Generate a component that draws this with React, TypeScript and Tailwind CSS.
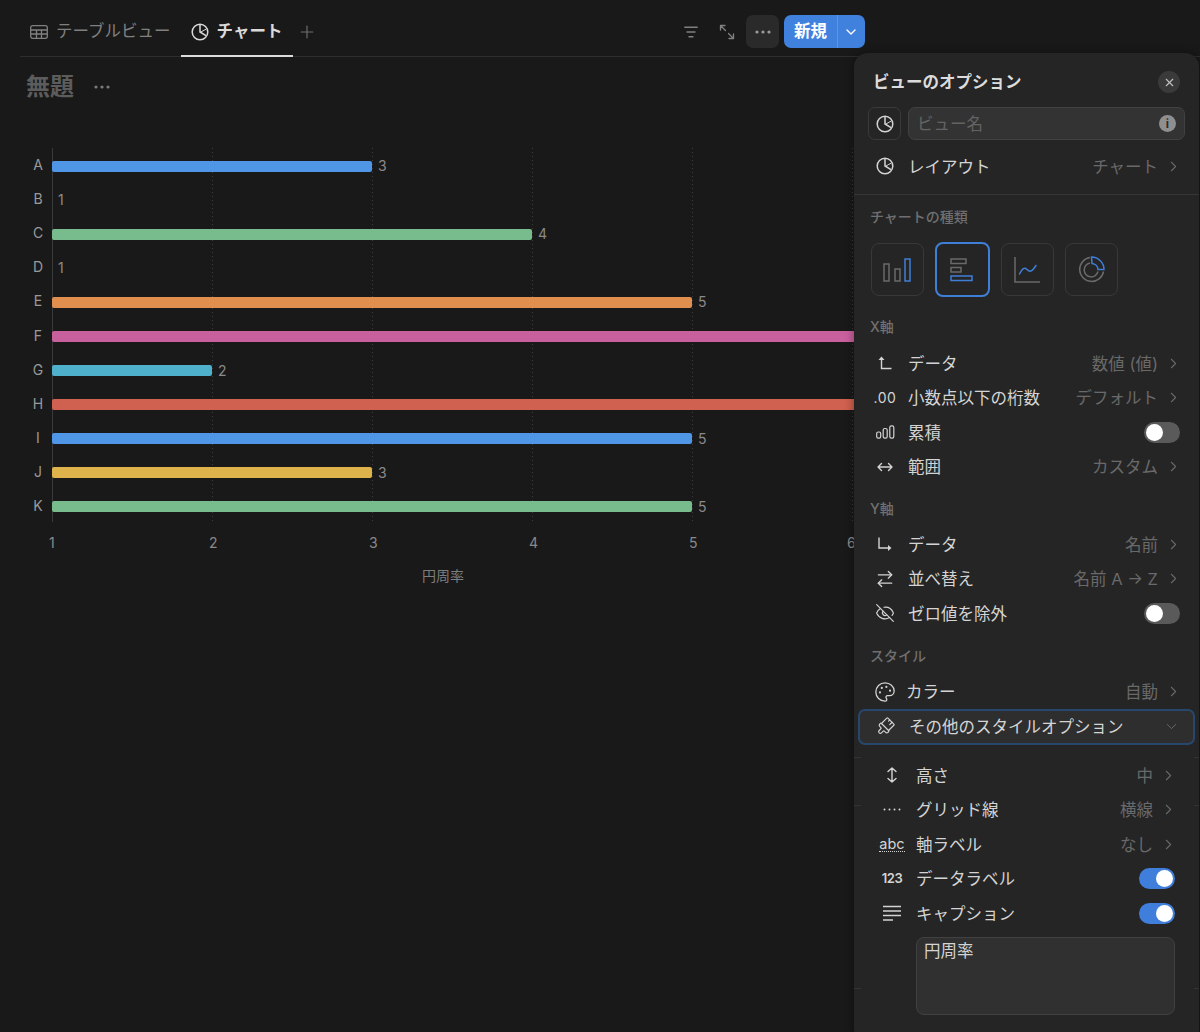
import { FC, ReactNode } from "react";
import { Palette, PaintbrushVertical, EyeOff, ArrowRightLeft, ChevronRight, ChevronDown, X, Plus } from "lucide-react";

const jp = "font-['Inter','Noto_Sans_CJK_JP',sans-serif]";

const PieIcon: FC<{ size?: number }> = ({ size = 18 }) => (
  <svg width={size} height={size} viewBox="0 0 18 18" fill="none" stroke="currentColor" strokeWidth="1.5">
    <circle cx="9" cy="9" r="7.8" />
    <path d="M9 1.2V9l6 3.6" />
    <path d="M9.6 9.2l5.4-3" strokeWidth="1" />
  </svg>
);

const TableIcon = () => (
  <svg width="18" height="14" viewBox="0 0 18 14" fill="none" stroke="currentColor" strokeWidth="1.3">
    <rect x="0.7" y="0.7" width="16.6" height="12.6" rx="2" />
    <path d="M0.7 5h16.6M0.7 9h16.6M6.5 5v8.3M11.5 5v8.3" />
  </svg>
);

const FilterIcon = () => (
  <svg width="14" height="12" viewBox="0 0 14 12" fill="none" stroke="currentColor" strokeWidth="1.4" strokeLinecap="round">
    <path d="M0.8 1.2h12.4M3 6h8M5 10.8h4" />
  </svg>
);

const ExpandIcon = () => (
  <svg width="16" height="16" viewBox="0 0 16 16" fill="none" stroke="currentColor" strokeWidth="1.3" strokeLinecap="round" strokeLinejoin="round">
    <path d="M1.5 6V1.5H6M1.5 1.5l5 5M14.5 10v4.5H10M14.5 14.5l-5-5" />
  </svg>
);

const Dots: FC<{ className?: string }> = ({ className }) => (
  <svg width="16" height="4" viewBox="0 0 16 4" fill="currentColor" className={className}>
    <circle cx="2" cy="2" r="1.6" />
    <circle cx="8" cy="2" r="1.6" />
    <circle cx="14" cy="2" r="1.6" />
  </svg>
);

const GridDots = () => (
  <svg width="18" height="3" viewBox="0 0 18 3" fill="currentColor">
    <circle cx="1.5" cy="1.5" r="1" />
    <circle cx="6.5" cy="1.5" r="1" />
    <circle cx="11.5" cy="1.5" r="1" />
    <circle cx="16.5" cy="1.5" r="1" />
  </svg>
);

const AxisUpIcon = () => (
  <svg width="16" height="16" viewBox="0 0 16 16" fill="none" stroke="currentColor" strokeWidth="1.4">
    <path d="M4.5 3v10.5h10" />
    <path d="M1.5 5l3-3.5 3 3.5z" fill="currentColor" stroke="none" />
  </svg>
);

const AxisRightIcon = () => (
  <svg width="16" height="16" viewBox="0 0 16 16" fill="none" stroke="currentColor" strokeWidth="1.4">
    <path d="M2 1.5v10.5h10" />
    <path d="M11 9l3.5 3-3.5 3z" fill="currentColor" stroke="none" />
  </svg>
);

const StackIcon = () => (
  <svg width="19" height="14" viewBox="0 0 19 14" fill="none" stroke="currentColor" strokeWidth="1.2">
    <rect x="0.7" y="7" width="4" height="6.2" rx="1.6" />
    <rect x="7.2" y="3.5" width="4" height="9.7" rx="1.6" />
    <rect x="13.8" y="0.8" width="4" height="12.4" rx="1.6" />
  </svg>
);

const RangeIcon = () => (
  <svg width="16" height="10" viewBox="0 0 16 10" fill="none" stroke="currentColor" strokeWidth="1.4" strokeLinecap="round" strokeLinejoin="round">
    <path d="M1 5h14M4.5 1.5L1 5l3.5 3.5M11.5 1.5L15 5l-3.5 3.5" />
  </svg>
);

const HeightIcon = () => (
  <svg width="12" height="16" viewBox="0 0 12 16" fill="none" stroke="currentColor" strokeWidth="1.4" strokeLinecap="round" strokeLinejoin="round">
    <path d="M6 1v14M2 4.5L6 1l4 3.5M2 11.5L6 15l4-3.5" />
  </svg>
);

const CaptionIcon = () => (
  <svg width="18" height="16" viewBox="0 0 18 16" fill="none" stroke="currentColor" strokeWidth="1.3">
    <path d="M0 1.5h18M0 6h18M0 10.5h18M0 15h10" />
  </svg>
);

const ChartBtn: FC<{ active?: boolean; children: ReactNode }> = ({ active, children }) => (
  <div className={active
    ? "w-[55px] h-[55px] -mt-[1px] rounded-[8px] border-2 border-[#3f7fd8] flex items-center justify-center"
    : "w-[53px] h-[53px] rounded-[8px] border border-[#383838] flex items-center justify-center"}>
    {children}
  </div>
);

const Toggle: FC<{ on?: boolean }> = ({ on }) => (
  <div className={on
    ? "w-[36px] h-[21px] rounded-full bg-[#3f7fdb] flex items-center justify-end px-[2px]"
    : "w-[36px] h-[21px] rounded-full bg-[#5a5a5a] flex items-center px-[2px]"}>
    <div className="w-[17px] h-[17px] rounded-full bg-white" />
  </div>
);

const Row: FC<{ icon: ReactNode; label: string; value?: string; toggle?: "on" | "off"; sub?: boolean; gap?: string }> = ({ icon, label, value, toggle, sub, gap }) => (
  <div className={sub ? "h-[34.5px] flex items-center pl-[22px] pr-[24px]" : "h-[34.5px] flex items-center pl-[15px] pr-[19px]"}>
    <div className="w-[32px] flex items-center justify-center text-[#d4d4d4]">{icon}</div>
    <span className={`mt-[2px] text-[16.5px] text-[#d4d4d4] ${gap ?? (sub ? "ml-[8px]" : "ml-[7px]")}`}>{label}</span>
    <div className="ml-auto flex items-center">
      {value && <span className="mt-[2px] text-[16.5px] text-[#696969]">{value}</span>}
      {value && <ChevronRight size={17} strokeWidth={1.5} className="text-[#696969] ml-[7px] -mr-[2px]" />}
      {toggle && <Toggle on={toggle === "on"} />}
    </div>
  </div>
);

const SectionLabel: FC<{ text: string; className: string }> = ({ text, className }) => (
  <div className={`h-[20px] pl-[16px] pb-[2px] flex items-center text-[14px] font-medium text-[#6f6f6f] ${className}`}>{text}</div>
);

const bars = [
  { name: "A", v: 3, color: "bg-[#4f96e6]" },
  { name: "B", v: 1, color: "" },
  { name: "C", v: 4, color: "bg-[#78bb8d]" },
  { name: "D", v: 1, color: "" },
  { name: "E", v: 5, color: "bg-[#e08f4e]" },
  { name: "F", v: 6.1, color: "bg-[#c9609e]" },
  { name: "G", v: 2, color: "bg-[#4fb0cc]" },
  { name: "H", v: 6.1, color: "bg-[#d0604f]" },
  { name: "I", v: 5, color: "bg-[#4f96e6]" },
  { name: "J", v: 3, color: "bg-[#deb34c]" },
  { name: "K", v: 5, color: "bg-[#78bb8d]" },
];

const Chart = () => (
  <div className="mt-[44px] ml-[32px] w-[860px]">
    <div className="relative h-[374px] pt-[1px]">
      {[2, 3, 4, 5, 6].map((n) => (
        <div
          key={n}
          className="absolute top-0 bottom-0 w-[1px] bg-[repeating-linear-gradient(to_bottom,#3c3c3c_0,#3c3c3c_1px,transparent_1px,transparent_4px)]"
          style={{ left: 20 + (n - 1) * 160 }}
        />
      ))}
      <div className="absolute left-[20px] top-0 bottom-0 w-[1px] bg-[#3a3a3a]" />
      {bars.map((b) => (
        <div key={b.name} className="relative h-[34.1px] flex items-center">
          <span className="w-[12px] -mt-[3px] text-center text-[14px] text-[#9a9a9a]">{b.name}</span>
          <div className="ml-[8px] flex items-center">
            {b.color && (
              <div className={`h-[11px] rounded-[2px] ${b.color}`} style={{ width: (b.v - 1) * 160 }} />
            )}
            {b.v < 6 && <span className="ml-[6px] -mt-[1px] text-[14px] text-[#8a8a8a]">{b.v}</span>}
          </div>
        </div>
      ))}
    </div>
    <div className="relative h-[20px] mt-[10px] ml-[17px] flex">
      {[1, 2, 3, 4, 5, 6].map((n) => (
        <span key={n} className={n === 6 ? "w-[160px] shrink-0 -ml-[2px] text-[14px] text-[#8a8a8a]" : "w-[160px] shrink-0 text-[14px] text-[#8a8a8a]"}>{n}</span>
      ))}
    </div>
    <div className="mt-[13px] w-[822px] text-center text-[14px] text-[#7d7d7d]">円周率</div>
  </div>
);

const Popover = () => (
  <div className="absolute left-[854px] top-[53px] w-[345px] h-[990px] rounded-[14px] bg-[#252525] shadow-[0_0_10px_rgba(0,0,0,0.4)]">
    {[704, 752, 935].map((y) => (
      <div key={y}>
        <div className="absolute left-0 w-[7px] h-[1px] bg-[#333333]" style={{ top: y }} />
        <div className="absolute right-0 w-[5px] h-[1px] bg-[#333333]" style={{ top: y }} />
      </div>
    ))}
    <div className="h-[54px] mt-[2px] pl-[19px] pr-[19px] flex items-center">
      <span className="text-[16.5px] font-bold text-[#dcdcdc]">ビューのオプション</span>
      <div className="ml-auto w-[22px] h-[22px] rounded-full bg-[#3a3a3a] flex items-center justify-center">
        <X size={13} strokeWidth={2} className="text-[#c4c4c4]" />
      </div>
    </div>
    <div className="h-[33px] -mt-[2px] pl-[14px] pr-[14px] flex gap-[7px]">
      <div className="w-[33px] rounded-[7px] border border-[#3a3a3a] flex items-center justify-center text-[#d4d4d4]">
        <PieIcon />
      </div>
      <div className="flex-1 rounded-[7px] border border-[#414141] bg-[#333333] pl-[8px] pr-[8px] flex items-center">
        <span className="mt-[2px] text-[16.5px] text-[#636363]">ビュー名</span>
        <div className="ml-auto w-[17px] h-[17px] rounded-full bg-[#8f8f8f] flex items-center justify-center text-[12px] font-bold text-[#2c2c2c]">i</div>
      </div>
    </div>
    <div className="mt-[9px]">
      <Row icon={<PieIcon />} label="レイアウト" value="チャート" />
    </div>
    <div className="mt-[10.5px] border-t border-[#363636]" />
    <SectionLabel text="チャートの種類" className="mt-[12px]" />
    <div className="mt-[16px] ml-[16.5px] flex gap-[11px]">
      <ChartBtn>
        <svg width="28" height="24" viewBox="0 0 28 24" fill="none" strokeWidth="1.5">
          <rect x="1" y="6" width="5" height="17" stroke="#6a6a6a" />
          <rect x="12" y="11" width="5" height="12" stroke="#6a6a6a" />
          <rect x="22" y="1" width="5" height="22" stroke="#3f7fd8" />
        </svg>
      </ChartBtn>
      <ChartBtn active>
        <svg width="24" height="24" viewBox="0 0 24 24" fill="none" strokeWidth="1.5">
          <rect x="1" y="1" width="15" height="4.5" stroke="#6a6a6a" />
          <rect x="1" y="9.5" width="10" height="4.5" stroke="#6a6a6a" />
          <rect x="1" y="18" width="21" height="4.5" stroke="#3f7fd8" />
        </svg>
      </ChartBtn>
      <ChartBtn>
        <svg width="27" height="27" viewBox="0 0 27 27" fill="none" strokeWidth="1.5">
          <path d="M1 1v25h25" stroke="#6a6a6a" />
          <path d="M5.5 18c3-6 5-7 7.5-4.5s4.5 3 9-4" stroke="#3f7fd8" strokeLinecap="round" />
        </svg>
      </ChartBtn>
      <ChartBtn>
        <svg width="27" height="27" viewBox="0 0 27 27" fill="none" strokeWidth="1.5">
          <path d="M12 1.5a12 12 0 1 0 13.5 14" stroke="#6a6a6a" />
          <path d="M12 7a7 7 0 1 0 8 8.5" stroke="#6a6a6a" />
          <path d="M13.5 1a12.5 12.5 0 0 1 12.5 12.5l-6 0a6.5 6.5 0 0 0-6-6z" stroke="#3f7fd8" />
        </svg>
      </ChartBtn>
    </div>
    <SectionLabel text="X軸" className="mt-[20px]" />
    <div className="mt-[9px]">
      <Row icon={<AxisUpIcon />} label="データ" value="数値 (値)" />
      <Row icon={<span className="text-[14px] text-[#d4d4d4] tracking-[0.5px]">.00</span>} label="小数点以下の桁数" value="デフォルト" />
      <Row icon={<StackIcon />} label="累積" toggle="off" />
      <Row icon={<RangeIcon />} label="範囲" value="カスタム" />
    </div>
    <SectionLabel text="Y軸" className="mt-[15px]" />
    <div className="mt-[8px]">
      <Row icon={<AxisRightIcon />} label="データ" value="名前" />
      <Row icon={<ArrowRightLeft size={20} strokeWidth={1.6} />} label="並べ替え" value="名前 A → Z" />
      <Row icon={<EyeOff size={20} strokeWidth={1.4} />} label="ゼロ値を除外" toggle="off" />
    </div>
    <SectionLabel text="スタイル" className="mt-[15.5px]" />
    <div className="mt-[8.5px]">
      <Row icon={<Palette size={22} strokeWidth={1.4} />} label="カラー" value="自動" gap="ml-[5px]" />
    </div>
    <div className="mt-[-0.5px] mx-[4px] h-[36px] rounded-[7px] border-2 border-[#27476f] bg-[#2e2e2e] flex items-center pl-[9px] pr-[13px]">
      <div className="w-[32px] flex justify-center text-[#d4d4d4]">
        <PaintbrushVertical size={20} strokeWidth={1.4} className="rotate-45" />
      </div>
      <span className="mt-[2px] ml-[8px] text-[16.5px] text-[#d4d4d4]">その他のスタイルオプション</span>
      <ChevronDown size={17} strokeWidth={1.4} className="ml-auto text-[#696969]" />
    </div>
    <div className="mt-[13.5px]">
      <Row sub icon={<HeightIcon />} label="高さ" value="中" />
      <Row sub icon={<GridDots />} label="グリッド線" value="横線" />
      <Row sub icon={<span className="text-[14.5px] leading-[15px] border-b border-dotted border-[#d4d4d4] text-[#d4d4d4]">abc</span>} label="軸ラベル" value="なし" />
      <Row sub icon={<span className="text-[13px] font-semibold text-[#d4d4d4] tracking-[-0.5px]">123</span>} label="データラベル" toggle="on" />
      <Row sub icon={<CaptionIcon />} label="キャプション" toggle="on" />
    </div>
    <div className="mt-[6px] ml-[62px] w-[259px] h-[78px] rounded-[8px] border border-[#414141] bg-[#303030] px-[7px] py-[1px] text-[16.5px] text-[#d4d4d4]">円周率</div>
  </div>
);

export default function App() {
  return (
    <div className={`relative h-[1032px] w-full overflow-hidden bg-[#191919] ${jp}`}>
      <div className="ml-[20px] h-[57px] pt-[7px] border-b border-[#2e2e2e] flex items-center">
        <div className="ml-[10px] flex items-center text-[#808080]">
          <TableIcon />
          <span className="ml-[8px] text-[16.5px]">テーブルビュー</span>
        </div>
        <div className="ml-[10px] self-stretch relative w-[112px] flex items-center justify-center text-[#dadada]">
          <PieIcon />
          <span className="ml-[8px] text-[16.5px] font-semibold">チャート</span>
          <div className="absolute left-0 right-0 -bottom-[1px] h-[2px] bg-[#dcdcdc]" />
        </div>
        <Plus size={20} strokeWidth={1.4} className="ml-[4px] text-[#6e6e6e]" />
        <div className="ml-auto mr-[335px] flex items-center">
          <div className="text-[#808080]"><FilterIcon /></div>
          <div className="ml-[21px] text-[#808080]"><ExpandIcon /></div>
          <div className="ml-[11px] w-[33px] h-[33px] rounded-[7px] bg-[#2a2a2a] flex items-center justify-center text-[#9b9b9b]">
            <Dots />
          </div>
          <div className="ml-[5px] h-[33px] w-[81px] rounded-[7px] bg-[#4081de] flex items-center text-white">
            <span className="w-[53px] text-center text-[16.5px] font-semibold">新規</span>
            <div className="w-[1px] self-stretch bg-[#5d95e4]" />
            <ChevronDown size={16} strokeWidth={2} className="ml-[5px]" />
          </div>
        </div>
      </div>
      <div className="mt-[13px] ml-[26px] flex items-center">
        <span className="text-[24px] leading-[34px] font-bold text-[#5c5c5c]">無題</span>
        <Dots className="ml-[20px] text-[#7a7a7a]" />
      </div>
      <Chart />
      <Popover />
    </div>
  );
}
